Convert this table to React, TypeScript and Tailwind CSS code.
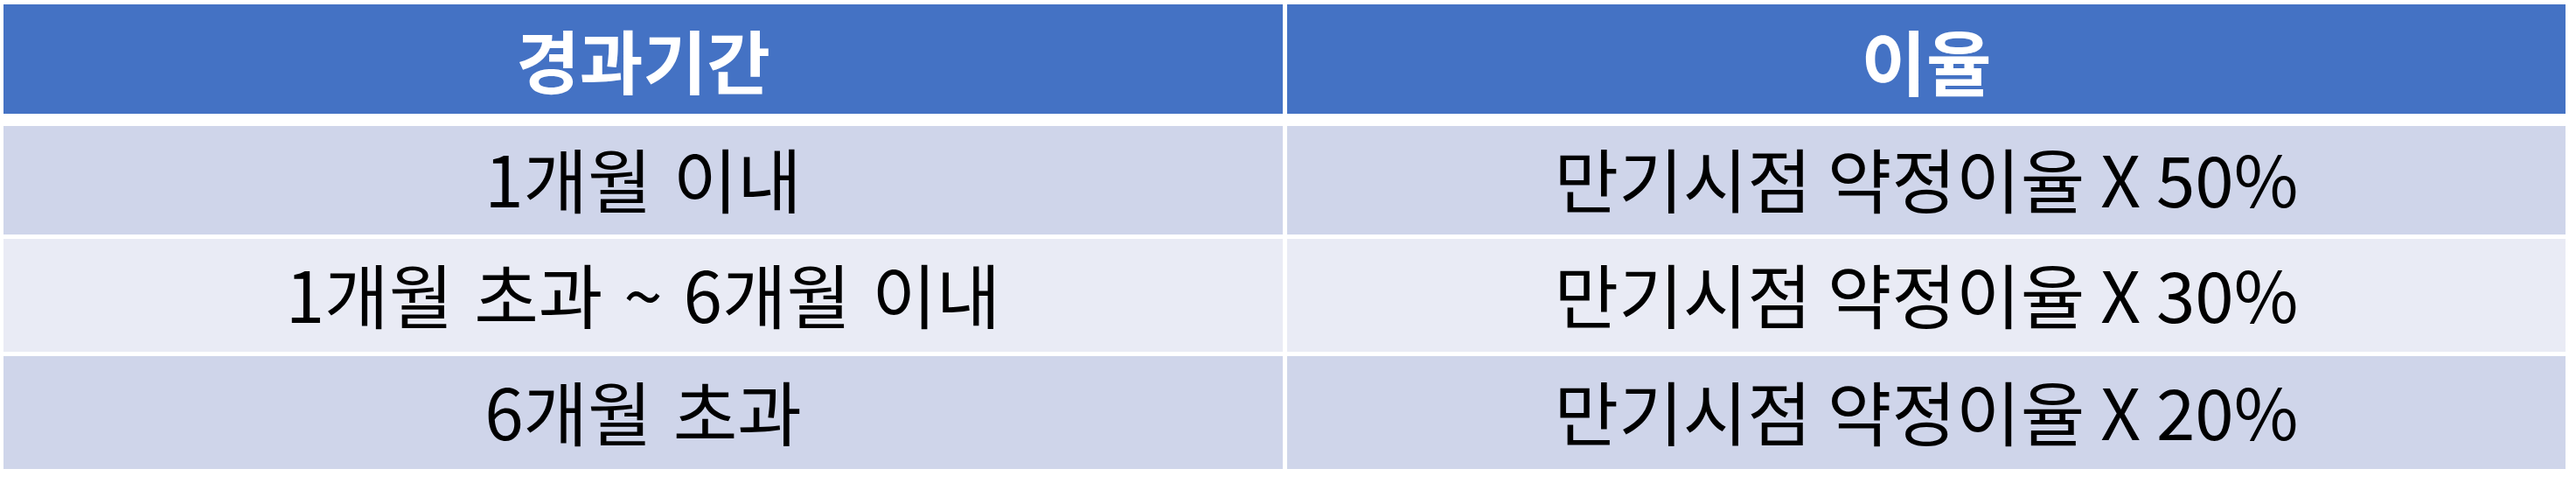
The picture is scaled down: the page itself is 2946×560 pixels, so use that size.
const rows = [
  { period: "1개월 이내", rate: "만기시점 약정이율 X 50%" },
  { period: "1개월 초과 ~ 6개월 이내", rate: "만기시점 약정이율 X 30%" },
  { period: "6개월 초과", rate: "만기시점 약정이율 X 20%" },
];

export default function App() {
  return (
    <div className="w-[2946px] h-[560px] bg-white pl-[4px] pt-[5px] font-['Noto_Sans_CJK_KR','Noto_Sans',sans-serif]">
      <div className="w-[2930px] flex flex-col">
        {/* header */}
        <div className="grid grid-cols-[1463px_1462px] gap-x-[5px] h-[125px] mb-[14px]">
          <div className="bg-[#4472c4] flex items-center justify-center text-white font-bold text-[79px] leading-none">경과기간</div>
          <div className="bg-[#4472c4] flex items-center justify-center text-white font-bold text-[81px] leading-none">이율</div>
        </div>
        {rows.map((row, i) => (
          <div
            key={row.period}
            className={`grid grid-cols-[1463px_1462px] gap-x-[5px] mb-[5px] ${i === 0 ? "h-[124px]" : "h-[129px]"}`}
          >
            <div className={`flex items-center justify-center pb-[8px] text-black text-[80px] leading-none [word-spacing:6px] ${i % 2 === 1 ? "bg-[#e9ebf5]" : "bg-[#cfd5ea]"}`}>
              {row.period}
            </div>
            <div className={`flex items-center justify-center pb-[8px] text-black text-[80px] leading-none ${i % 2 === 1 ? "bg-[#e9ebf5]" : "bg-[#cfd5ea]"}`}>
              {row.rate}
            </div>
          </div>
        ))}
      </div>
    </div>
  );
}
